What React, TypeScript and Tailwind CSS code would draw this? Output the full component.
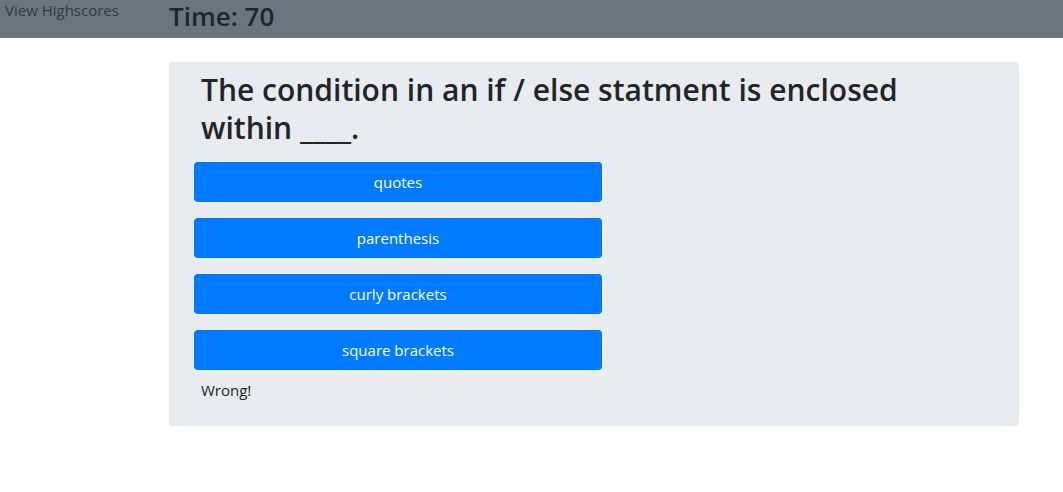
const answers = ["quotes", "parenthesis", "curly brackets", "square brackets"];

export default function App() {
  return (
    <div className="min-h-[492px] bg-white text-[#212529] font-['Open_Sans',sans-serif]">
      {/* HEADER */}
      <header className="flex h-[38px] bg-[#6c757d]">
        <a className="w-[169px] shrink-0 pl-[5px] pt-[1px] text-[15px] leading-[18px] text-[#343a40]">View Highscores</a>
        <h3 className="text-[26px] font-semibold leading-[32px] text-[#212529]">Time: 70</h3>
      </header>

      {/* QUIZ CARD */}
      <div className="pl-[169px] pr-[44px] pt-[24px]">
        <div className="rounded-[4px] bg-[#e9ecef] px-[25px] pt-[9px] pb-[24px]">
          <h2 className="px-[7px] text-[30px] font-semibold leading-[38px] text-[#212529]">
            The condition in an if / else statment is enclosed within ____.
          </h2>
          <div className="mt-[15px] flex w-[408px] flex-col gap-[16px]">
            {answers.map((a) => (
              <button
                key={a}
                className="h-[40px] rounded-[4px] bg-[#007bff] text-[15px] text-white"
              >
                {a}
              </button>
            ))}
          </div>
          <p className="mt-[8px] px-[7px] text-[15px] leading-[24px]">Wrong!</p>
        </div>
      </div>
    </div>
  );
}
